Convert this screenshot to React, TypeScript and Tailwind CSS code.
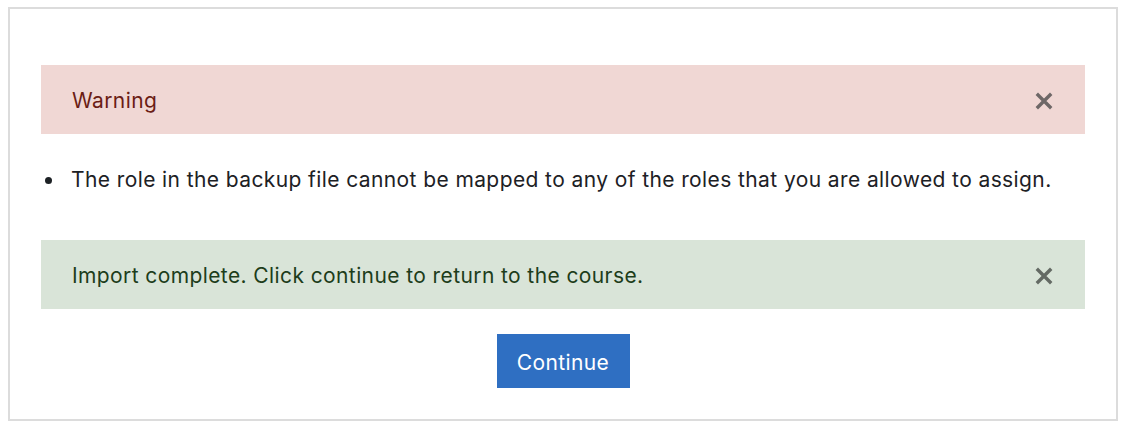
import React from 'react';

const CloseIcon: React.FC = () => (
  <svg width="18" height="18" viewBox="0 0 18 18" aria-hidden="true">
    <path d="M3 3 L15 15 M15 3 L3 15" stroke="currentColor" strokeWidth="3.4" strokeLinecap="square" />
  </svg>
);

const App: React.FC = () => {
  return (
    <div className="min-h-screen bg-white pl-[8px] pt-[7px] font-['Inter','Liberation_Sans',sans-serif] text-[21px] tracking-[0.4px]">
      <div className="w-[1110px] h-[414px] border-2 border-[#dcdcdc] px-[31px] pt-[56px]">
        <div className="h-[69px] bg-[#f0d7d4] flex items-center justify-between pl-[31px] pr-[32px] text-[#6b1d14]">
          <span className="pt-[3px]">Warning</span>
          <button className="text-[#6e6767] pt-[2px]"><CloseIcon /></button>
        </div>

        <ul className="mt-[31px] leading-[30px] text-[#1d2125]">
          <li className="flex items-center">
            <span className="w-[7px] h-[7px] rounded-full bg-[#1d2125] ml-[4px] mr-[19px]" />
            <span>The role in the backup file cannot be mapped to any of the roles that you are allowed to assign.</span>
          </li>
        </ul>

        <div className="mt-[45px] h-[69px] bg-[#d9e4d8] flex items-center justify-between pl-[31px] pr-[32px] text-[#1d3d1b]">
          <span className="pt-[3px]">Import complete. Click continue to return to the course.</span>
          <button className="text-[#646a64] pt-[2px]"><CloseIcon /></button>
        </div>

        <div className="flex justify-center mt-[25px]">
          <button className="w-[133px] h-[54px] pt-[3px] bg-[#2f6fc2] text-white">Continue</button>
        </div>
      </div>
    </div>
  );
};

export default App;
